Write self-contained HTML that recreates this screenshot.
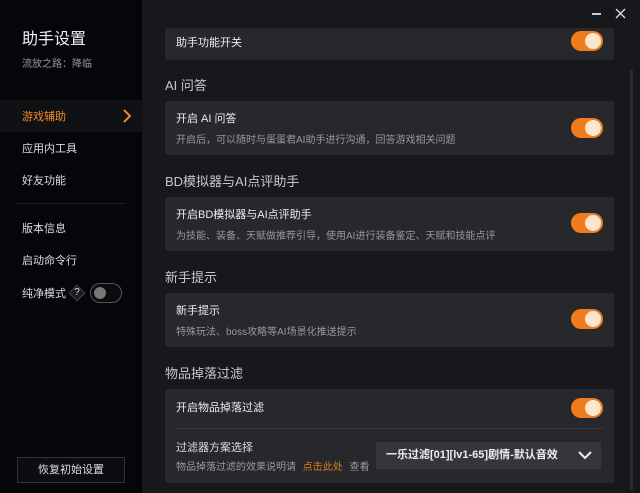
<!DOCTYPE html>
<html><head><meta charset="utf-8"><style>
*{margin:0;padding:0;box-sizing:border-box}
body{width:640px;height:493px;overflow:hidden;background:#16181c;font-family:"Liberation Sans","Noto Sans CJK SC",sans-serif;color:#e6e6e6;position:relative}
.side{position:absolute;left:0;top:0;width:142px;height:493px;background:#050609}
.a{position:absolute;white-space:nowrap}
.card{position:absolute;left:165px;width:449px;background:#26282c;border-radius:3px}
.t{position:absolute;left:11px;font-size:11px;color:#eee}
.d{position:absolute;left:11px;font-size:10px;color:#999}
.h{position:absolute;left:165px;font-size:13px;color:#c8c8c8}
.tg{position:absolute;width:32px;height:20px;border-radius:10px;background:#f07c1e}
.tg:after{content:"";position:absolute;right:2px;top:2px;width:16px;height:16px;border-radius:50%;background:#fbe7cf}
</style></head><body>
<div class="side">
<div class="a" style="left:22px;top:25px;font-size:16px;color:#f0f0f0">助手设置</div>
<div class="a" style="left:22px;top:55px;font-size:10px;color:#999">流放之路：降临</div>
<div class="a" style="left:0;top:100px;width:142px;height:32px;background:#101114"></div>
<div class="a" style="left:22px;top:108px;font-size:11px;color:#f08a2a">游戏辅助</div>
<svg class="a" style="left:122px;top:109px" width="10" height="14"><path d="M2 1l6 6-6 6" stroke="#f08a2a" stroke-width="2" fill="none"/></svg>
<div class="a" style="left:22px;top:140px;font-size:11px;color:#ddd">应用内工具</div>
<div class="a" style="left:22px;top:172px;font-size:11px;color:#ddd">好友功能</div>
<div class="a" style="left:16px;top:203px;width:110px;height:1px;background:#1d1f23"></div>
<div class="a" style="left:22px;top:220px;font-size:11px;color:#ddd">版本信息</div>
<div class="a" style="left:22px;top:252px;font-size:11px;color:#ddd">启动命令行</div>
<div class="a" style="left:22px;top:285px;font-size:11px;color:#ddd">纯净模式</div>
<div class="a" style="left:71px;top:287px;width:12px;height:12px;transform:rotate(45deg);background:#1a1b1f;border:1px solid #444"></div>
<div class="a" style="left:74px;top:286px;width:6px;font-size:10px;line-height:14px;color:#ddd;text-align:center">?</div>
<div class="a" style="left:90px;top:283px;width:32px;height:20px;border-radius:10px;border:1px solid #555;background:#0a0b0d"></div>
<div class="a" style="left:94px;top:287px;width:12px;height:12px;border-radius:50%;background:#777"></div>
<div class="a" style="left:17px;top:457px;width:108px;height:26px;border:1px solid #333;background:#0c0d10;font-size:11px;color:#ddd;text-align:center;line-height:24px">恢复初始设置</div>
</div>
<div class="a" style="left:592px;top:13px;width:9px;height:2px;background:#ccc"></div>
<svg class="a" style="left:615px;top:8px" width="11" height="11"><path d="M1 1l9 9M10 1l-9 9" stroke="#ddd" stroke-width="1.3"/></svg>
<div class="a" style="left:630px;top:70px;width:3px;height:420px;background:#2a2c30"></div>

<div class="card" style="top:28px;height:32px"><div class="t" style="top:6px">助手功能开关</div><div class="tg" style="left:406px;top:3px"></div></div>
<div class="h" style="top:75px">AI 问答</div>
<div class="card" style="top:101px;height:54px"><div class="t" style="top:9px">开启 AI 问答</div><div class="d" style="top:30px">开启后，可以随时与蛋蛋君AI助手进行沟通，回答游戏相关问题</div><div class="tg" style="left:406px;top:17px"></div></div>
<div class="h" style="top:171px">BD模拟器与AI点评助手</div>
<div class="card" style="top:197px;height:54px"><div class="t" style="top:9px">开启BD模拟器与AI点评助手</div><div class="d" style="top:30px">为技能、装备、天赋做推荐引导，使用AI进行装备鉴定、天赋和技能点评</div><div class="tg" style="left:406px;top:16px"></div></div>
<div class="h" style="top:267px">新手提示</div>
<div class="card" style="top:293px;height:54px"><div class="t" style="top:9px">新手提示</div><div class="d" style="top:30px">特殊玩法、boss攻略等AI场景化推送提示</div><div class="tg" style="left:406px;top:16px"></div></div>
<div class="h" style="top:363px">物品掉落过滤</div>
<div class="card" style="top:389px;height:94px">
<div class="t" style="top:10px">开启物品掉落过滤</div><div class="tg" style="left:406px;top:9px"></div>
<div class="a" style="left:11px;top:39px;width:429px;height:1px;background:#35373b"></div>
<div class="t" style="top:50px;color:#ddd">过滤器方案选择</div>
<div class="d" style="top:69px">物品掉落过滤的效果说明请 <span style="color:#e07a1f;margin:0 4px">点击此处</span> 查看</div>
<div class="a" style="left:211px;top:53px;width:225px;height:27px;background:#34363a;font-size:11px;font-weight:bold;color:#eee;line-height:27px;padding-left:10px">一乐过滤[01][lv1-65]剧情-默认音效</div>
<svg class="a" style="left:413px;top:62px" width="14" height="9"><path d="M1 1l6 6 6-6" stroke="#eee" stroke-width="2" fill="none"/></svg>
</div>
</body></html>
